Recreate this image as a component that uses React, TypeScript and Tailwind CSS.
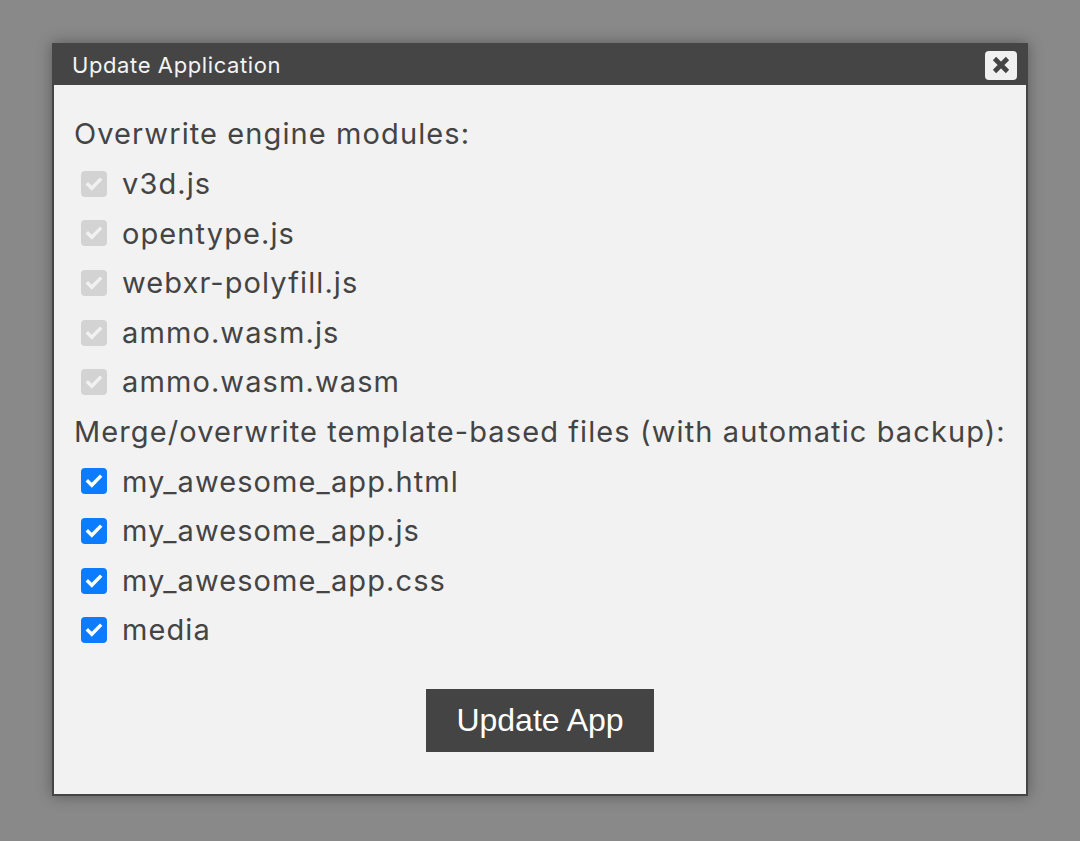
import React from 'react';

const ENGINE = ['v3d.js', 'opentype.js', 'webxr-polyfill.js', 'ammo.wasm.js', 'ammo.wasm.wasm'];
const TEMPLATE = ['my_awesome_app.html', 'my_awesome_app.js', 'my_awesome_app.css', 'media'];

function Check({ disabled }: { disabled?: boolean }) {
  return (
    <span
      className={
        'flex items-center justify-center w-[26px] h-[26px] rounded-[4px] ' +
        (disabled ? 'bg-[#d3d3d3]' : 'bg-[#0b7bff]')
      }
    >
      <svg width="20" height="20" viewBox="0 0 20 20">
        <path
          d="M4 10.5l3.8 3.8L16 5.8"
          fill="none"
          stroke={disabled ? '#f1f1f1' : '#ffffff'}
          strokeWidth="3.4"
          strokeLinecap="square"
        />
      </svg>
    </span>
  );
}

function Row({ label, disabled }: { label: string; disabled?: boolean }) {
  return (
    <div className="flex items-center h-[49.6px] pl-[7px] gap-[15px]">
      <Check disabled={disabled} />
      <span>{label}</span>
    </div>
  );
}

export default function App() {
  return (
    <div className="w-full h-[841px] bg-[#898989] flex items-start justify-center pt-[43px]">
      <div
        className="w-[976px] border-2 border-[#454545] bg-[#f2f2f2] shadow-[0_0_14px_rgba(0,0,0,0.35)]"
        style={{ fontFamily: 'Inter, "Noto Sans", sans-serif' }}
      >
        <div className="h-[40px] bg-[#454545] flex items-center justify-between pl-[18px] pr-[9px]">
          <span className="text-[22px] tracking-[0.6px] text-[#f4f4f4]">Update Application</span>
          <button className="w-[32px] h-[29px] rounded-[4px] bg-[#f0f0f0] flex items-center justify-center">
            <svg width="18" height="18" viewBox="0 0 18 18">
              <path d="M2.5 2.5L15.5 15.5M15.5 2.5L2.5 15.5" stroke="#444" strokeWidth="4.6" strokeLinecap="butt" />
            </svg>
          </button>
        </div>
        <div className="pt-[24px] pb-[42px] px-[20px] text-[29px] tracking-[1.1px] whitespace-nowrap text-[#444444]">
          <div className="h-[50px] flex items-center">Overwrite engine modules:</div>
          {ENGINE.map((e) => (
            <Row key={e} label={e} disabled />
          ))}
          <div className="h-[49.6px] flex items-center">Merge/overwrite template-based files (with automatic backup):</div>
          {TEMPLATE.map((e) => (
            <Row key={e} label={e} />
          ))}
          <div className="flex justify-center mt-[34px]">
            <button
              className="w-[228px] h-[63px] bg-[#444444] text-white text-[32px] tracking-normal"
              style={{ fontFamily: '"Liberation Sans", Arial, sans-serif' }}
            >
              Update App
            </button>
          </div>
        </div>
      </div>
    </div>
  );
}
